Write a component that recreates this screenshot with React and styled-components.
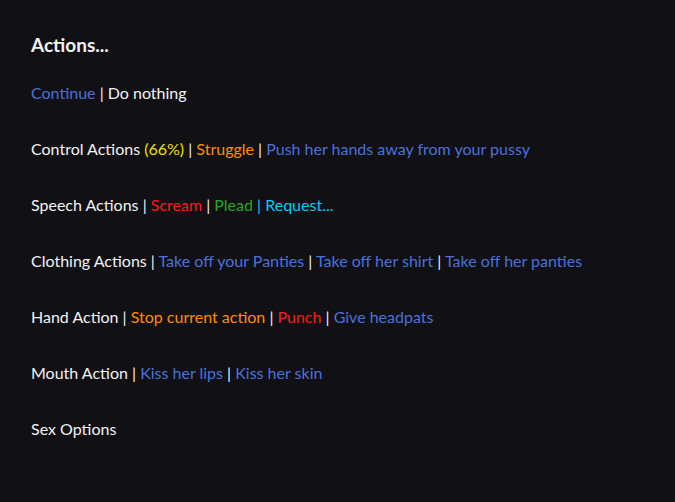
import React from 'react';
import styled, { createGlobalStyle } from 'styled-components';

const GlobalStyle = createGlobalStyle`
    html, body {
        margin: 0;
        padding: 0;
        background-color: #111014;
    }
    body {
        font-family: "Segoe UI", Lato, "Noto Sans", sans-serif;
    }
`;

const colors = {
    text: '#f2f2f2',
    blue: '#4a72dc',
    orange: '#ff8c00',
    red: '#ff1a1a',
    green: '#22a822',
    cyan: '#00ccf5',
    yellow: '#f0e000',
};

const Page = styled.div`
    width: 675px;
    height: 502px;
    box-sizing: border-box;
    padding: 33px 31px 0;
    background-color: #111014;
    color: ${colors.text};
    font-size: 16px;
`;

const Title = styled.h2`
    margin: 0 0 25px;
    font-size: 19px;
    font-weight: 700;
    line-height: 24px;
`;

const List = styled.div`
    display: flex;
    flex-direction: column;
    gap: 34px;
`;

const Row = styled.div`
    line-height: 22px;
    white-space: nowrap;
`;

const Label = styled.span`
    color: ${colors.text};
`;

const Option = styled.span`
    color: ${props => colors[props.$tone] || colors.blue};
    cursor: pointer;
`;

const Sep = styled.span`
    color: ${props => colors[props.$tone] || colors.text};
`;

const rows = [
    { items: [{ text: 'Continue', tone: 'blue' }, { text: 'Do nothing', tone: 'text' }] },
    {
        label: 'Control Actions',
        extra: { text: ' (66%)', tone: 'yellow' },
        items: [{ text: 'Struggle', tone: 'orange' }, { text: 'Push her hands away from your pussy', tone: 'blue' }],
    },
    {
        label: 'Speech Actions',
        items: [{ text: 'Scream', tone: 'red' }, { text: 'Plead', tone: 'green' }, { text: 'Request...', tone: 'cyan', sep: 'cyan' }],
    },
    {
        label: 'Clothing Actions',
        items: [
            { text: 'Take off your Panties', tone: 'blue' },
            { text: 'Take off her shirt', tone: 'blue' },
            { text: 'Take off her panties', tone: 'blue' },
        ],
    },
    {
        label: 'Hand Action',
        items: [
            { text: 'Stop current action', tone: 'orange' },
            { text: 'Punch', tone: 'red' },
            { text: 'Give headpats', tone: 'blue' },
        ],
    },
    {
        label: 'Mouth Action',
        items: [{ text: 'Kiss her lips', tone: 'blue' }, { text: 'Kiss her skin', tone: 'blue' }],
    },
    { label: 'Sex Options', items: [] },
];

export default function App() {
    return (
        <>
            <GlobalStyle />
            <Page>
                <Title>Actions...</Title>
                <List>
                    {rows.map((row, idx) => (
                        <Row key={idx}>
                            {row.label && <Label>{row.label}</Label>}
                            {row.extra && <Option $tone={row.extra.tone}>{row.extra.text}</Option>}
                            {row.items.map((item, i) => (
                                <React.Fragment key={i}>
                                    {(row.label || i > 0) && <Sep $tone={item.sep}> | </Sep>}
                                    <Option $tone={item.tone}>{item.text}</Option>
                                </React.Fragment>
                            ))}
                        </Row>
                    ))}
                </List>
            </Page>
        </>
    );
}
